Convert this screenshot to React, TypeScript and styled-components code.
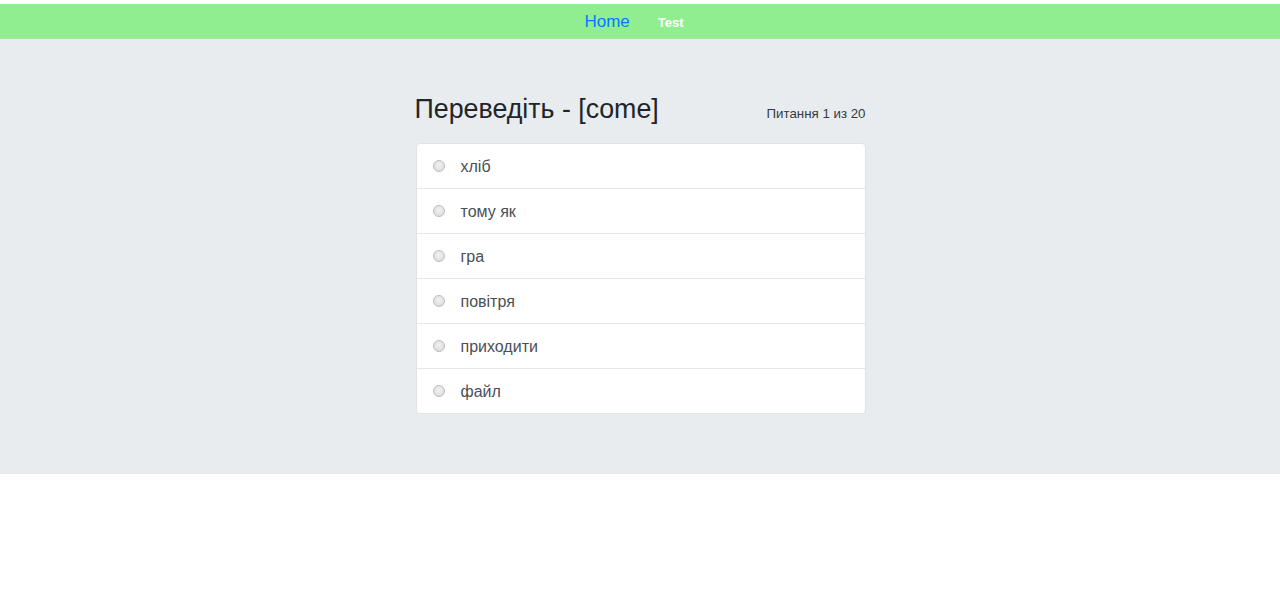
import React from "react";
import styled, { createGlobalStyle } from "styled-components";

const Global = createGlobalStyle`
  html, body { margin: 0; padding: 0; background: #fff; }
  body { font-family: "Liberation Sans", Arial, sans-serif; color: #212529; }
`;

const Page = styled.div`
  padding-top: 4px;
`;

const NavBar = styled.nav`
  height: 34px;
  background: #90ee90;
  display: flex;
  align-items: center;
  justify-content: center;
  gap: 28px;
  padding-right: 12px;
  border-bottom: 1px solid #a8e6a8;
`;

const NavLink = styled.a<{ $active?: boolean }>`
  font-family: "Liberation Sans", Arial, sans-serif;
  font-size: ${(p) => (p.$active ? "13px" : "17px")};
  font-weight: ${(p) => (p.$active ? 700 : 400)};
  color: ${(p) => (p.$active ? "#ffffff" : "#007bff")};
  text-decoration: none;
  cursor: pointer;
  margin-top: 2px;
`;

const Jumbo = styled.section`
  background: #e8ecef;
  padding: 52px 0 60px;
  display: flex;
  justify-content: center;
`;

const Column = styled.div`
  width: 450px;
  margin-left: 1px;
`;

const Header = styled.div`
  display: flex;
  justify-content: space-between;
  align-items: center;
  height: 34px;
  margin-bottom: 18px;
`;

const Title = styled.h2`
  margin: 0 0 0 -1px;
  font-size: 26.8px;
  font-weight: 400;
  line-height: 34px;
  color: #212529;
  padding-top: 2px;
`;

const Counter = styled.span`
  font-size: 13.3px;
  color: #343a40;
  margin-top: 10px;
`;

const List = styled.ul`
  list-style: none;
  margin: 0;
  padding: 0;
  background: #fff;
  border: 1px solid #dfe3e6;
  border-radius: 4px;
  overflow: hidden;
`;

const Item = styled.li`
  height: 44px;
  display: flex;
  align-items: center;
  padding: 0 16px;
  border-top: 1px solid #e4e7ea;
  &:first-child { border-top: none; }
`;

const Radio = styled.span`
  width: 10px;
  height: 10px;
  border-radius: 50%;
  border: 1px solid #bdbdbd;
  background: radial-gradient(circle at 50% 40%, #f2f2f2, #d8d8d8);
  margin-right: 16px;
  flex-shrink: 0;
`;

const Label = styled.span`
  font-size: 16px;
  color: #495057;
  padding-top: 1px;
`;

const options = ["хліб", "тому як", "гра", "повітря", "приходити", "файл"];

export default function App() {
  return (
    <>
      <Global />
      <Page>
        <NavBar>
          <NavLink>Home</NavLink>
          <NavLink $active>Test</NavLink>
        </NavBar>
        <Jumbo>
          <Column>
            <Header>
              <Title>Переведіть - [come]</Title>
              <Counter>Питання 1 из 20</Counter>
            </Header>
            <List>
              {options.map((o) => (
                <Item key={o}>
                  <Radio />
                  <Label>{o}</Label>
                </Item>
              ))}
            </List>
          </Column>
        </Jumbo>
      </Page>
    </>
  );
}
